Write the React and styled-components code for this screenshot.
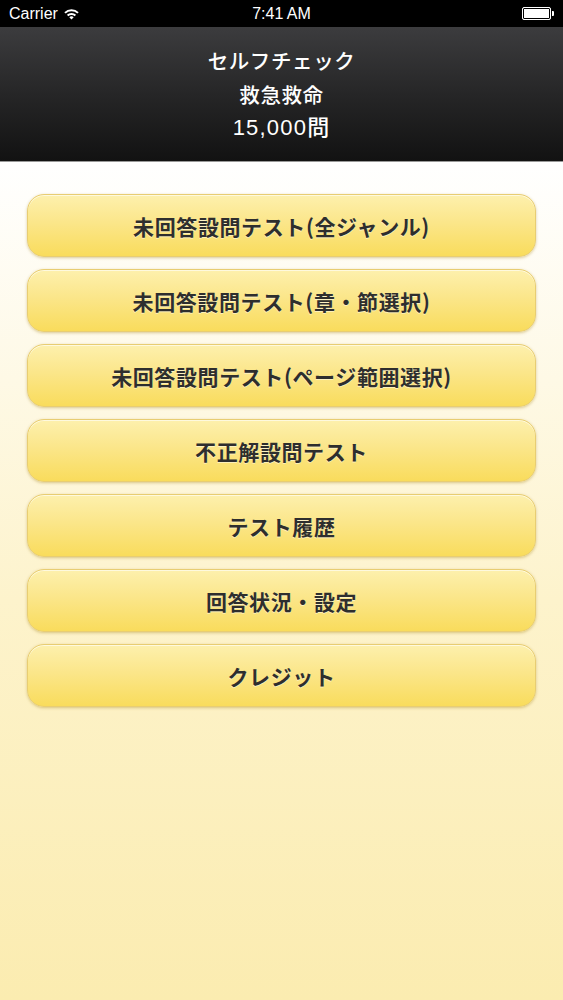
import styled, { createGlobalStyle } from 'styled-components';

const GlobalStyle = createGlobalStyle`
  html, body {
    margin: 0;
    padding: 0;
  }
  body {
    font-family: "Noto Sans CJK JP", "Noto Sans", sans-serif;
  }
`;

const menuItems = [
  '未回答設問テスト(全ジャンル)',
  '未回答設問テスト(章・節選択)',
  '未回答設問テスト(ページ範囲選択)',
  '不正解設問テスト',
  'テスト履歴',
  '回答状況・設定',
  'クレジット',
];

function App() {
  return (
    <Screen>
      <GlobalStyle />
      <StatusBar>
        <Carrier>
          Carrier
          <svg width="17" height="12" viewBox="0 0 17 12">
            <path d="M8.5 11.5 L6.3 9.2 A3.2 3.2 0 0 1 10.7 9.2 Z" fill="#fff" />
            <path d="M3.9 6.8 A6.6 6.6 0 0 1 13.1 6.8 L11.7 8.2 A4.6 4.6 0 0 0 5.3 8.2 Z" fill="#fff" />
            <path d="M1.3 4.2 A10.2 10.2 0 0 1 15.7 4.2 L14.3 5.6 A8.2 8.2 0 0 0 2.7 5.6 Z" fill="#fff" />
          </svg>
        </Carrier>
        <Clock>7:41 AM</Clock>
        <Battery>
          <BatteryBody />
          <BatteryTip />
        </Battery>
      </StatusBar>
      <Header>
        <HeaderLine>セルフチェック</HeaderLine>
        <HeaderLine>救急救命</HeaderLine>
        <HeaderLine $numeric>15,000問</HeaderLine>
      </Header>
      <Menu>
        {menuItems.map((label) => (
          <MenuButton key={label}>{label}</MenuButton>
        ))}
      </Menu>
    </Screen>
  );
}

const Screen = styled.div`
  width: 563px;
  min-height: 1000px;
  display: flex;
  flex-direction: column;
  background: linear-gradient(180deg, #ffffff 160px, #fdf3cc 600px, #fbecb0 1000px);
`;

const StatusBar = styled.div`
  height: 27px;
  background: #000;
  color: #fff;
  display: grid;
  grid-template-columns: 1fr auto 1fr;
  align-items: center;
  padding: 0 9px;
  font-family: "Liberation Sans", Arial, sans-serif;
  font-size: 16px;
`;

const Carrier = styled.div`
  display: flex;
  align-items: center;
  gap: 5px;
`;

const Clock = styled.div`
  font-weight: 500;
`;

const Battery = styled.div`
  justify-self: end;
  display: flex;
  align-items: center;
  gap: 1px;
`;

const BatteryBody = styled.div`
  width: 27px;
  height: 11px;
  border: 1px solid #fff;
  border-radius: 2px;
  background: #fff;
  box-shadow: inset 0 0 0 1px #000;
`;

const BatteryTip = styled.div`
  width: 2px;
  height: 5px;
  background: #fff;
  border-radius: 0 1px 1px 0;
`;

const Header = styled.div`
  height: 134px;
  background: linear-gradient(180deg, #3c3c3e 0%, #262627 50%, #121212 100%);
  display: flex;
  flex-direction: column;
  align-items: center;
  justify-content: center;
  border-bottom: 1px solid #999;
`;

const HeaderLine = styled.div`
  color: #fff;
  font-family: ${(p) => (p.$numeric ? '"Liberation Sans", ' : '')}"Noto Sans CJK JP", sans-serif;
  font-size: ${(p) => (p.$numeric ? '22px' : '20.5px')};
  font-weight: 500;
  line-height: 34px;
  letter-spacing: ${(p) => (p.$numeric ? '1.2px' : '0.6px')};
`;

const Menu = styled.div`
  display: flex;
  flex-direction: column;
  gap: 12px;
  padding: 32px 27px 0;
`;

const MenuButton = styled.button`
  height: 63px;
  border-radius: 17px;
  border: 1px solid #e8cd72;
  background: linear-gradient(180deg, #fdf0ad 0%, #fbe68a 45%, #f9dc5c 100%);
  box-shadow: 0 1px 3px rgba(170, 140, 40, 0.45), inset 0 1px 0 rgba(255, 255, 255, 0.6);
  font-family: "Noto Sans CJK JP", "Noto Sans", sans-serif;
  font-size: 21px;
  font-weight: 700;
  letter-spacing: 0.6px;
  color: #2e2e2e;
  text-shadow: 0 1px 0 rgba(255, 255, 255, 0.5);
  cursor: pointer;
  padding: 0;
`;

export default App;
